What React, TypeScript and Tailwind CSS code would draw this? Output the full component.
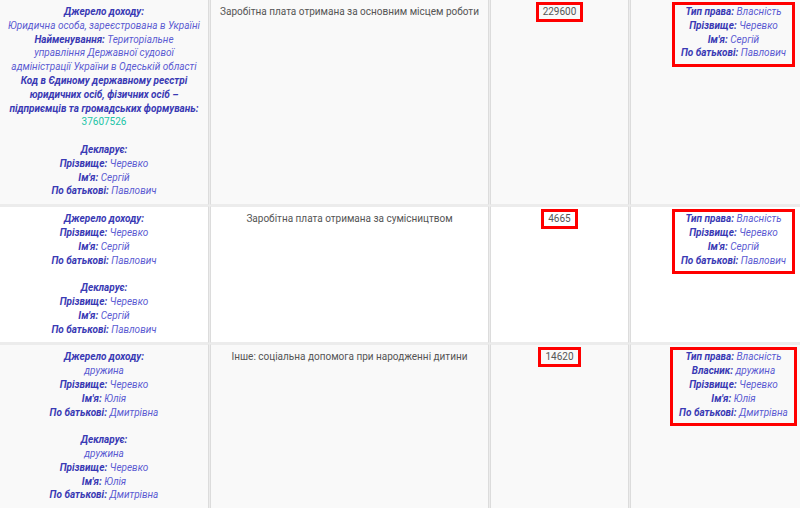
import React from "react";

type Line = { label?: string; value?: string; code?: string } | null;

const Field = ({ label, value }: { label?: string; value?: string }) => (
  <div>
    {label && <span className="font-bold italic text-[#3a3ab4]">{label}</span>}
    {label && value ? " " : ""}
    {value && <span className="italic text-[#5b5bd2]">{value}</span>}
  </div>
);

const Lines = ({ lines }: { lines: Line[] }) => (
  <>
    {lines.map((l, i) =>
      l === null ? (
        <div key={i}>&nbsp;</div>
      ) : l.code ? (
        <div key={i} className="text-[#20c4a6]">
          {l.code}
        </div>
      ) : (
        <Field key={i} label={l.label} value={l.value} />
      )
    )}
  </>
);

const person = (last: string, first: string, middle: string): Line[] => [
  { label: "Прізвище:", value: last },
  { label: "Ім'я:", value: first },
  { label: "По батькові:", value: middle },
];

const rows: {
  source: Line[];
  title: string;
  amount: string;
  owner: Line[];
  bg: string;
}[] = [
  {
    bg: "bg-[#f9f9f9]",
    source: [
      { label: "Джерело доходу:" },
      { value: "Юридична особа, зареєстрована в Україні" },
      { label: "Найменування:", value: "Територіальне" },
      { value: "управління Державної судової" },
      { value: "адміністрації України в Одеській області" },
      { label: "Код в Єдиному державному реєстрі" },
      { label: "юридичних осіб, фізичних осіб –" },
      { label: "підприємців та громадських формувань:" },
      { code: "37607526" },
      null,
      { label: "Декларує:" },
      ...person("Черевко", "Сергій", "Павлович"),
    ],
    title: "Заробітна плата отримана за основним місцем роботи",
    amount: "229600",
    owner: [{ label: "Тип права:", value: "Власність" }, ...person("Черевко", "Сергій", "Павлович")],
  },
  {
    bg: "bg-white",
    source: [
      { label: "Джерело доходу:" },
      ...person("Черевко", "Сергій", "Павлович"),
      null,
      { label: "Декларує:" },
      ...person("Черевко", "Сергій", "Павлович"),
    ],
    title: "Заробітна плата отримана за сумісництвом",
    amount: "4665",
    owner: [{ label: "Тип права:", value: "Власність" }, ...person("Черевко", "Сергій", "Павлович")],
  },
  {
    bg: "bg-[#f9f9f9]",
    source: [
      { label: "Джерело доходу:" },
      { value: "дружина" },
      ...person("Черевко", "Юлія", "Дмитрівна"),
      null,
      { label: "Декларує:" },
      { value: "дружина" },
      ...person("Черевко", "Юлія", "Дмитрівна"),
    ],
    title: "Інше: соціальна допомога при народженні дитини",
    amount: "14620",
    owner: [
      { label: "Тип права:", value: "Власність" },
      { label: "Власник:", value: "дружина" },
      ...person("Черевко", "Юлія", "Дмитрівна"),
    ],
  },
];

export default function App() {
  return (
    <div className="w-[800px] h-[508px] overflow-hidden bg-[#ececec] font-['Roboto',sans-serif] text-[10px] leading-[13.8px]">
      <div className="flex flex-col gap-px w-[840px]">
        {rows.map((r, i) => (
          <div key={i} className="flex gap-px">
            <div
              className={`${r.bg} w-[209px] shrink-0 border-r border-r-[#dcdcdc] ${i === 0 ? "" : "border-t"} border-b border-y-[#ececec] px-[4px] pt-[5px] pb-[6px] text-center whitespace-nowrap`}
            >
              <Lines lines={r.source} />
            </div>
            <div
              className={`${r.bg} w-[279px] shrink-0 border-x border-x-[#dcdcdc] ${i === 0 ? "" : "border-t"} border-b border-y-[#ececec] px-[5px] pt-[5px] text-center text-[#555555]`}
            >
              {r.title}
            </div>
            <div
              className={`${r.bg} w-[139px] shrink-0 border-x border-x-[#dcdcdc] ${i === 0 ? "" : "border-t"} border-b border-y-[#ececec] pt-[2px] text-center text-[#555555]`}
            >
              <span className="inline-block border-[3px] border-[#ff0000] px-[4px]">{r.amount}</span>
            </div>
            <div
              className={`${r.bg} w-[207px] shrink-0 border-x border-x-[#dcdcdc] ${i === 0 ? "" : "border-t"} border-b border-y-[#ececec] pt-[2px] text-center whitespace-nowrap`}
            >
              <div className="inline-block border-[3px] border-[#ff0000] px-[6px] pb-[4px]">
                <Lines lines={r.owner} />
              </div>
            </div>
          </div>
        ))}
      </div>
    </div>
  );
}
